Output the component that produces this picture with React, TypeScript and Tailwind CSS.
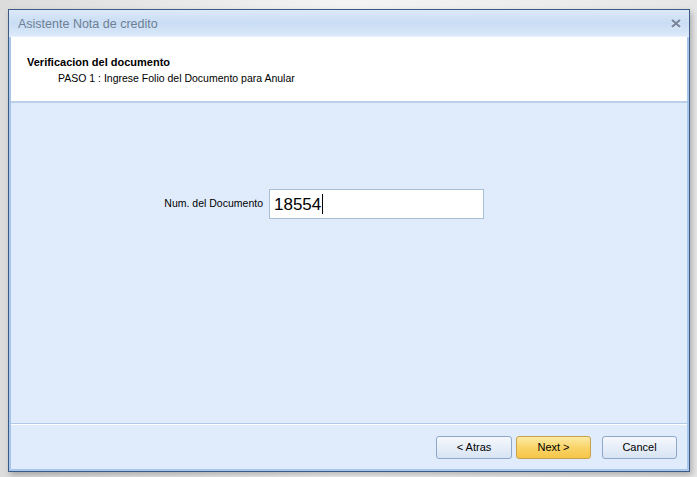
export default function App() {
  return (
    <div
      className="w-[697px] h-[477px] bg-gradient-to-r from-[#dcdcdc] via-[#f4f4f4] to-[#e6e6e6] pt-[9px] pl-[8px] overflow-hidden"
      style={{ fontFamily: '"Liberation Sans", Arial, sans-serif' }}
    >
      <div className="w-[682px] h-[463px] border border-[#3c5b84] flex flex-col bg-[#e0ecfc] shadow-[2px_3px_6px_rgba(0,0,0,0.25)]">
        {/* title bar */}
        <div className="h-[27px] flex items-center justify-between pl-[9px] pr-[8px] bg-gradient-to-b from-[#dde9f8] via-[#c9ddf4] to-[#dbe9fa] border-b border-[#e9f2fd]">
          <span className="text-[12.5px] text-[#6e7f96] mt-[2px]">Asistente Nota de credito</span>
          <svg width="10" height="10" viewBox="0 0 10 10" className="mt-[2px]">
            <path d="M1 2 L9 9 M9 2 L1 9" stroke="#ffffff" strokeWidth="2.2" opacity="0.7" />
            <path d="M1 1 L9 8 M9 1 L1 8" stroke="#76859a" strokeWidth="2.2" />
          </svg>
        </div>

        <div className="flex-1 flex flex-col border-x-2 border-b-2 border-[#a7c6ec]">
          {/* header */}
          <div className="h-[66px] bg-white border-b-2 border-[#bccfe9] pl-[16px] pt-[18px]">
            <div className="text-[11px] font-bold text-black leading-[14px]">Verificacion del documento</div>
            <div className="text-[10.5px] text-black leading-[14px] pl-[31px] mt-[2px]">
              PASO 1 : Ingrese Folio del Documento para Anular
            </div>
          </div>

          {/* body */}
          <div className="flex-1 bg-[#e0ecfc] flex items-start pt-[86px] pl-[153px]">
            <div className="flex items-center gap-[6px]">
              <span className="w-[99px] text-right whitespace-nowrap text-[10.5px] text-black">Num. del Documento</span>
              <div className="w-[215px] h-[30px] bg-white border border-[#a9bfd8] flex items-center pl-[4px]">
                <span className="text-[17px] text-black leading-none">18554</span>
                <span className="w-px h-[20px] bg-black ml-[1px]" />
              </div>
            </div>
          </div>

          {/* footer */}
          <div className="h-[46px] border-t border-[#b2c9e7] shadow-[inset_0_1px_0_#ffffff] flex items-center justify-end gap-[4px] pr-[10px] pt-[1px]">
            <button className="w-[76px] h-[23px] rounded-[3px] border border-[#8fa8c9] bg-gradient-to-b from-[#f5f8fd] to-[#d8e4f4] text-[11px] text-black">
              &lt; Atras
            </button>
            <button className="w-[75px] h-[23px] rounded-[3px] border border-[#c7a24f] bg-gradient-to-b from-[#fdeaa4] via-[#f9d468] to-[#f6c548] text-[11px] text-black">
              Next &gt;
            </button>
            <button className="w-[75px] h-[23px] ml-[7px] rounded-[3px] border border-[#8fa8c9] bg-gradient-to-b from-[#f5f8fd] to-[#d8e4f4] text-[11px] text-black">
              Cancel
            </button>
          </div>
        </div>
      </div>
    </div>
  )
}
